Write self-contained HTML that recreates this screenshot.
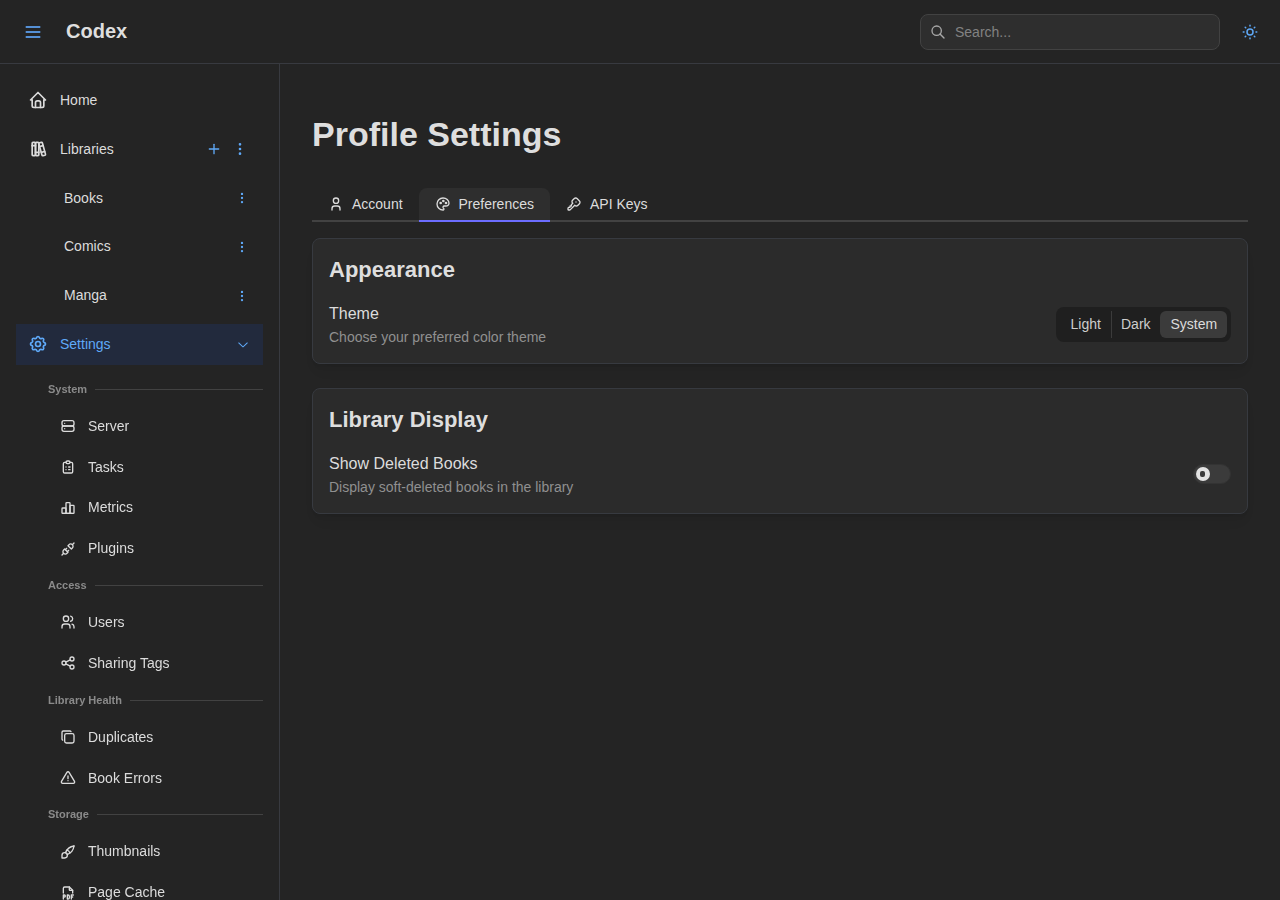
<!DOCTYPE html>
<html><head><meta charset="utf-8"><style>
*{box-sizing:border-box;margin:0;padding:0}
html,body{width:1280px;height:900px;overflow:hidden;background:#242424;font-family:"Liberation Sans",sans-serif;color:#dcdcdc}
.a{position:absolute}
.t{position:absolute;white-space:nowrap}
.f14{font-size:14px;line-height:14px}
.f16{font-size:16px;line-height:16px}
svg.i{fill:none;stroke:currentColor;stroke-width:2;stroke-linecap:round;stroke-linejoin:round;flex:none;display:block}
svg.ab{position:absolute;fill:none;stroke:currentColor;stroke-width:2;stroke-linecap:round;stroke-linejoin:round;display:block}
.row{position:absolute;left:16px;width:247px;height:40.8px;display:flex;align-items:center;font-size:14px;line-height:24.8px;white-space:nowrap}
.row .lb{flex:1}
.lab{position:absolute;left:48px;width:215px;height:33px;display:flex;align-items:center;font-size:11px;font-weight:700;color:#8a8a8a;white-space:nowrap}
.lab .ln{flex:1;height:1px;background:#424242;margin-left:8px}
.kids{position:absolute;left:0;top:0;width:279px;height:900px;will-change:transform}
</style></head><body>
<div class="a" style="left:0;top:63px;width:1280px;height:1px;background:#383a40"></div>
<div class="a" style="left:279px;top:64px;width:1px;height:836px;background:#383a40"></div>
<svg class="a" style="left:20px;top:20px" width="30" height="25"><g fill="#5590d5"><rect x="5.7" y="6" width="14.6" height="2"/><rect x="5.7" y="11" width="14.6" height="2"/><rect x="5.7" y="16" width="14.6" height="2"/></g></svg>
<div class="t" style="left:66px;top:21px;font-size:20px;line-height:20px;font-weight:700;color:#dedede">Codex</div>
<div class="a" style="left:920px;top:14px;width:300px;height:36px;border:1px solid #424242;border-radius:8px;background:#2e2e2e"></div>
<svg class="ab" style="left:930px;top:24px;color:#a8a8a8" width="16" height="16" viewBox="0 0 24 24"><path d="M10 10m-7 0a7 7 0 1 0 14 0a7 7 0 1 0 -14 0"/><path d="M21 21l-6 -6"/></svg>
<div class="t f14" style="left:955px;top:25px;color:#828282">Search...</div>
<svg class="ab" style="left:1241px;top:23px;color:#5fa9f8" width="18" height="18" viewBox="0 0 24 24"><path d="M12 12m-4 0a4 4 0 1 0 8 0a4 4 0 1 0 -8 0"/><path d="M3 12h1m8 -9v1m8 8h1m-9 8v1m-6.4 -15.4l.7 .7m12.1 -.7l-.7 .7m0 11.4l.7 .7m-12.1 -.7l-.7 .7"/></svg>
<div class="row" style="top:80.000px;padding-left:12px"><svg class="i" style="margin-right:12px" width="20" height="20" viewBox="0 0 24 24"><path d="M5 12l-2 0l9 -9l9 9l-2 0"/><path d="M5 12v7a2 2 0 0 0 2 2h10a2 2 0 0 0 2 -2v-7"/><path d="M9 21v-6a2 2 0 0 1 2 -2h2a2 2 0 0 1 2 2v6"/></svg><span class="lb">Home</span></div>
<div class="row" style="top:128.800px;padding-left:12px;padding-right:15px"><svg class="i" style="margin-right:12px" width="20" height="20" viewBox="0 0 24 24"><path d="M5 4m0 1a1 1 0 0 1 1 -1h2a1 1 0 0 1 1 1v14a1 1 0 0 1 -1 1h-2a1 1 0 0 1 -1 -1z"/><path d="M9 4m0 1a1 1 0 0 1 1 -1h2a1 1 0 0 1 1 1v14a1 1 0 0 1 -1 1h-2a1 1 0 0 1 -1 -1z"/><path d="M5 8h4"/><path d="M9 16h4"/><path d="M13.803 4.56l2.184 -.53c.562 -.135 1.133 .19 1.282 .732l3.695 13.418a1.02 1.02 0 0 1 -.634 1.219l-.133 .041l-2.184 .53c-.562 .135 -1.133 -.19 -1.282 -.732l-3.695 -13.418a1.02 1.02 0 0 1 .634 -1.219l.133 -.041z"/><path d="M14 9l4 -1"/><path d="M16 16l3.923 -.98"/></svg><span class="lb">Libraries</span><svg class="i" style="color:#5fa9f8;margin-right:10px" width="16" height="16" viewBox="0 0 24 24"><path d="M12 5l0 14"/><path d="M5 12l14 0"/></svg><svg class="i" style="color:#5fa9f8" width="16" height="16" viewBox="0 0 24 24"><path d="M12 12m-1 0a1 1 0 1 0 2 0a1 1 0 1 0 -2 0"/><path d="M12 19m-1 0a1 1 0 1 0 2 0a1 1 0 1 0 -2 0"/><path d="M12 5m-1 0a1 1 0 1 0 2 0a1 1 0 1 0 -2 0"/></svg></div>
<div class="row" style="top:177.600px;padding-left:48px;padding-right:14px"><span class="lb">Books</span><svg class="i" style="color:#5fa9f8" width="14" height="14" viewBox="0 0 24 24"><path d="M12 12m-1 0a1 1 0 1 0 2 0a1 1 0 1 0 -2 0"/><path d="M12 19m-1 0a1 1 0 1 0 2 0a1 1 0 1 0 -2 0"/><path d="M12 5m-1 0a1 1 0 1 0 2 0a1 1 0 1 0 -2 0"/></svg></div>
<div class="row" style="top:226.400px;padding-left:48px;padding-right:14px"><span class="lb">Comics</span><svg class="i" style="color:#5fa9f8" width="14" height="14" viewBox="0 0 24 24"><path d="M12 12m-1 0a1 1 0 1 0 2 0a1 1 0 1 0 -2 0"/><path d="M12 19m-1 0a1 1 0 1 0 2 0a1 1 0 1 0 -2 0"/><path d="M12 5m-1 0a1 1 0 1 0 2 0a1 1 0 1 0 -2 0"/></svg></div>
<div class="row" style="top:275.200px;padding-left:48px;padding-right:14px"><span class="lb">Manga</span><svg class="i" style="color:#5fa9f8" width="14" height="14" viewBox="0 0 24 24"><path d="M12 12m-1 0a1 1 0 1 0 2 0a1 1 0 1 0 -2 0"/><path d="M12 19m-1 0a1 1 0 1 0 2 0a1 1 0 1 0 -2 0"/><path d="M12 5m-1 0a1 1 0 1 0 2 0a1 1 0 1 0 -2 0"/></svg></div>
<div class="a" style="left:16px;top:324.000px;width:247px;height:40.8px;background:#222a3d"></div>
<div class="row" style="top:324.000px;padding-left:12px;padding-right:12px;color:#5fa9f8"><svg class="i" style="margin-right:12px" width="20" height="20" viewBox="0 0 24 24"><path d="M10.325 4.317c.426 -1.756 2.924 -1.756 3.35 0a1.724 1.724 0 0 0 2.573 1.066c1.543 -.94 3.31 .826 2.37 2.37a1.724 1.724 0 0 0 1.065 2.572c1.756 .426 1.756 2.924 0 3.35a1.724 1.724 0 0 0 -1.066 2.573c.94 1.543 -.826 3.31 -2.37 2.37a1.724 1.724 0 0 0 -2.572 1.065c-.426 1.756 -2.924 1.756 -3.35 0a1.724 1.724 0 0 0 -2.573 -1.066c-1.543 .94 -3.31 -.826 -2.37 -2.37a1.724 1.724 0 0 0 -1.065 -2.572c-1.756 -.426 -1.756 -2.924 0 -3.35a1.724 1.724 0 0 0 1.066 -2.573c-.94 -1.543 .826 -3.31 2.37 -2.37c1 .608 2.296 .07 2.572 -1.065z"/><path d="M9 12a3 3 0 1 0 6 0a3 3 0 0 0 -6 0"/></svg><span class="lb" style="color:#5fa9f8">Settings</span><svg width="16" height="16" viewBox="0 0 15 15" style="flex:none;display:block;fill:currentColor"><path d="M3.13523 6.15803C3.3241 5.95657 3.64052 5.94637 3.84197 6.13523L7.5 9.56464L11.158 6.13523C11.3595 5.94637 11.6759 5.95657 11.8648 6.15803C12.0536 6.35949 12.0434 6.67591 11.842 6.86477L7.84197 10.6148C7.64964 10.7951 7.35036 10.7951 7.15803 10.6148L3.15803 6.86477C2.95657 6.67591 2.94637 6.35949 3.13523 6.15803Z"/></svg></div>
<div class="kids"><div class="lab" style="top:372.800px"><span style="position:relative;top:0px">System</span><span class="ln"></span></div><div class="row" style="top:405.800px;padding-left:44px"><svg class="i" style="margin-right:12px;position:relative;top:0px" width="16" height="16" viewBox="0 0 24 24"><path d="M3 4m0 3a3 3 0 0 1 3 -3h12a3 3 0 0 1 3 3v2a3 3 0 0 1 -3 3h-12a3 3 0 0 1 -3 -3z"/><path d="M3 12m0 3a3 3 0 0 1 3 -3h12a3 3 0 0 1 3 3v2a3 3 0 0 1 -3 3h-12a3 3 0 0 1 -3 -3z"/><path d="M7 8l0 .01"/><path d="M7 16l0 .01"/></svg><span class="lb" style="position:relative;top:0px">Server</span></div><div class="row" style="top:446.600px;padding-left:44px"><svg class="i" style="margin-right:12px;position:relative;top:0px" width="16" height="16" viewBox="0 0 24 24"><path d="M9 5h-2a2 2 0 0 0 -2 2v12a2 2 0 0 0 2 2h10a2 2 0 0 0 2 -2v-12a2 2 0 0 0 -2 -2h-2"/><path d="M9 3m0 2a2 2 0 0 1 2 -2h2a2 2 0 0 1 2 2v0a2 2 0 0 1 -2 2h-2a2 2 0 0 1 -2 -2z"/><path d="M9 12l.01 0"/><path d="M13 12l2 0"/><path d="M9 16l.01 0"/><path d="M13 16l2 0"/></svg><span class="lb" style="position:relative;top:0px">Tasks</span></div><div class="row" style="top:487.400px;padding-left:44px"><svg class="i" style="margin-right:12px;position:relative;top:0px" width="16" height="16" viewBox="0 0 24 24"><path d="M3 13a1 1 0 0 1 1 -1h4a1 1 0 0 1 1 1v6a1 1 0 0 1 -1 1h-4a1 1 0 0 1 -1 -1z"/><path d="M15 9a1 1 0 0 1 1 -1h4a1 1 0 0 1 1 1v10a1 1 0 0 1 -1 1h-4a1 1 0 0 1 -1 -1z"/><path d="M9 5a1 1 0 0 1 1 -1h4a1 1 0 0 1 1 1v14a1 1 0 0 1 -1 1h-4a1 1 0 0 1 -1 -1z"/><path d="M4 20h14"/></svg><span class="lb" style="position:relative;top:0px">Metrics</span></div><div class="row" style="top:528.200px;padding-left:44px"><svg class="i" style="margin-right:12px;position:relative;top:0px" width="16" height="16" viewBox="0 0 24 24"><path d="M7 12l5 5l-1.5 1.5a3.536 3.536 0 1 1 -5 -5l1.5 -1.5z"/><path d="M17 12l-5 -5l1.5 -1.5a3.536 3.536 0 1 1 5 5l-1.5 1.5z"/><path d="M3 21l2.5 -2.5"/><path d="M18.5 5.5l2.5 -2.5"/><path d="M10 11l-2 2"/><path d="M13 14l-2 2"/></svg><span class="lb" style="position:relative;top:0px">Plugins</span></div><div class="lab" style="top:569.000px"><span style="position:relative;top:-1px">Access</span><span class="ln"></span></div><div class="row" style="top:602.000px;padding-left:44px"><svg class="i" style="margin-right:12px;position:relative;top:0px" width="16" height="16" viewBox="0 0 24 24"><path d="M9 7m-4 0a4 4 0 1 0 8 0a4 4 0 1 0 -8 0"/><path d="M3 21v-2a4 4 0 0 1 4 -4h4a4 4 0 0 1 4 4v2"/><path d="M16 3.13a4 4 0 0 1 0 7.75"/><path d="M21 21v-2a4 4 0 0 0 -3 -3.85"/></svg><span class="lb" style="position:relative;top:0px">Users</span></div><div class="row" style="top:642.800px;padding-left:44px"><svg class="i" style="margin-right:12px;position:relative;top:0px" width="16" height="16" viewBox="0 0 24 24"><path d="M6 12m-3 0a3 3 0 1 0 6 0a3 3 0 1 0 -6 0"/><path d="M18 6m-3 0a3 3 0 1 0 6 0a3 3 0 1 0 -6 0"/><path d="M18 18m-3 0a3 3 0 1 0 6 0a3 3 0 1 0 -6 0"/><path d="M8.7 10.7l6.6 -3.4"/><path d="M8.7 13.3l6.6 3.4"/></svg><span class="lb" style="position:relative;top:0px">Sharing Tags</span></div><div class="lab" style="top:683.600px"><span style="position:relative;top:0px">Library Health</span><span class="ln"></span></div><div class="row" style="top:716.600px;padding-left:44px"><svg class="i" style="margin-right:12px;position:relative;top:0px" width="16" height="16" viewBox="0 0 24 24"><path d="M7 7m0 2.667a2.667 2.667 0 0 1 2.667 -2.667h8.666a2.667 2.667 0 0 1 2.667 2.667v8.666a2.667 2.667 0 0 1 -2.667 2.667h-8.666a2.667 2.667 0 0 1 -2.667 -2.667z"/><path d="M4.012 16.737a2.005 2.005 0 0 1 -1.012 -1.737v-10c0 -1.1 .9 -2 2 -2h10c.75 0 1.158 .385 1.5 1"/></svg><span class="lb" style="position:relative;top:0px">Duplicates</span></div><div class="row" style="top:757.400px;padding-left:44px"><svg class="i" style="margin-right:12px;position:relative;top:0px" width="16" height="16" viewBox="0 0 24 24"><path d="M12 9v4"/><path d="M10.363 3.591l-8.106 13.534a1.914 1.914 0 0 0 1.636 2.871h16.214a1.914 1.914 0 0 0 1.636 -2.87l-8.106 -13.536a1.914 1.914 0 0 0 -3.274 0z"/><path d="M12 16h.01"/></svg><span class="lb" style="position:relative;top:1px">Book Errors</span></div><div class="lab" style="top:798.200px"><span style="position:relative;top:-1px">Storage</span><span class="ln"></span></div><div class="row" style="top:831.200px;padding-left:44px"><svg class="i" style="margin-right:12px;position:relative;top:0px" width="16" height="16" viewBox="0 0 24 24"><path d="M3 21v-4a4 4 0 1 1 4 4h-4"/><path d="M21 3a16 16 0 0 0 -12.8 10.2"/><path d="M21 3a16 16 0 0 1 -10.2 12.8"/><path d="M10.6 9a9 9 0 0 1 4.4 4.4"/></svg><span class="lb" style="position:relative;top:0px">Thumbnails</span></div><div class="row" style="top:872.000px;padding-left:44px"><svg class="i" style="margin-right:12px;position:relative;top:1px" width="16" height="16" viewBox="0 0 24 24"><path d="M14 3v4a1 1 0 0 0 1 1h4"/><path d="M5 12v-7a2 2 0 0 1 2 -2h7l5 5v4"/><path d="M5 18h1.5a1.5 1.5 0 0 0 0 -3h-1.5v6"/><path d="M17 18h2"/><path d="M20 15h-3v6"/><path d="M11 15v6h1a2 2 0 0 0 2 -2v-2a2 2 0 0 0 -2 -2h-1z"/></svg><span class="lb" style="position:relative;top:0px">Page Cache</span></div></div>
<div class="t" style="left:312px;top:117px;font-size:34px;line-height:34px;font-weight:700;color:#dedede">Profile Settings</div>
<div class="a" style="left:312px;top:220px;width:936px;height:2px;background:#424242"></div>
<div class="a" style="left:419px;top:188px;width:131px;height:34px;background:#2e2e2e;border-radius:8px 8px 0 0;border-bottom:2px solid #6c6dff"></div>
<svg class="ab" style="left:328px;top:196px;color:#dcdcdc" width="16" height="16" viewBox="0 0 24 24"><path d="M8 7a4 4 0 1 0 8 0a4 4 0 0 0 -8 0"/><path d="M6 21v-2a4 4 0 0 1 4 -4h4a4 4 0 0 1 4 4v2"/></svg>
<div class="t f14" style="left:352px;top:197px">Account</div>
<svg class="ab" style="left:435px;top:196px;color:#dcdcdc" width="16" height="16" viewBox="0 0 24 24"><path d="M12 21a9 9 0 0 1 0 -18c4.97 0 9 3.582 9 8c0 1.06 -.474 2.078 -1.318 2.828c-.844 .75 -1.989 1.172 -3.182 1.172h-2.5a2 2 0 0 0 -1 3.75a1.3 1.3 0 0 1 -1 2.25"/><path d="M8.5 10.5m-1 0a1 1 0 1 0 2 0a1 1 0 1 0 -2 0"/><path d="M12.5 7.5m-1 0a1 1 0 1 0 2 0a1 1 0 1 0 -2 0"/><path d="M16.5 10.5m-1 0a1 1 0 1 0 2 0a1 1 0 1 0 -2 0"/></svg>
<div class="t f14" style="left:458.5px;top:197px">Preferences</div>
<svg class="ab" style="left:566px;top:196px;color:#dcdcdc" width="16" height="16" viewBox="0 0 24 24"><path d="M16.555 3.843l3.602 3.602a2.877 2.877 0 0 1 0 4.069l-2.643 2.643a2.877 2.877 0 0 1 -4.069 0l-.301 -.301l-6.558 6.558a2 2 0 0 1 -1.239 .578l-.175 .008h-1.172a1 1 0 0 1 -.993 -.883l-.007 -.117v-1.172a2 2 0 0 1 .467 -1.284l.119 -.13l.414 -.414h2v-2h2v-2l2.144 -2.144l-.301 -.301a2.877 2.877 0 0 1 0 -4.069l2.643 -2.643a2.877 2.877 0 0 1 4.069 0z"/><path d="M15 9h.01"/></svg>
<div class="t f14" style="left:590px;top:197px">API Keys</div>
<div class="a" style="left:312px;top:238px;width:936px;height:126px;border:1px solid #373a40;border-radius:8px;background:#2b2b2b;box-shadow:0 1px 3px rgba(0,0,0,.05),rgba(0,0,0,.05) 0 10px 15px -5px,rgba(0,0,0,.04) 0 7px 7px -5px"></div>
<div class="t" style="left:329px;top:259px;font-size:22px;line-height:22px;font-weight:700;color:#dedede">Appearance</div>
<div class="t f16" style="left:329px;top:306px">Theme</div>
<div class="t f14" style="left:329px;top:330px;color:#909090">Choose your preferred color theme</div>
<div class="a" style="left:1056px;top:307px;width:175px;height:35px;border-radius:8px;background:#1f1f1f"></div>
<div class="a" style="left:1160px;top:311px;width:67px;height:27px;border-radius:6px;background:#3b3b3b"></div>
<div class="a" style="left:1111px;top:311px;width:1px;height:27px;background:#3b3b3b"></div>
<div class="t f14" style="left:1070.5px;top:317px;color:#cdcdcd">Light</div>
<div class="t f14" style="left:1121px;top:317px;color:#cdcdcd">Dark</div>
<div class="t f14" style="left:1170.5px;top:317px">System</div>
<div class="a" style="left:312px;top:388px;width:936px;height:126px;border:1px solid #373a40;border-radius:8px;background:#2b2b2b;box-shadow:0 1px 3px rgba(0,0,0,.05),rgba(0,0,0,.05) 0 10px 15px -5px,rgba(0,0,0,.04) 0 7px 7px -5px"></div>
<div class="t" style="left:329px;top:409px;font-size:22px;line-height:22px;font-weight:700;color:#dedede">Library Display</div>
<div class="t f16" style="left:329px;top:456px">Show Deleted Books</div>
<div class="t f14" style="left:329px;top:480px;color:#909090">Display soft-deleted books in the library</div>
<div class="a" style="left:1193px;top:464px;width:38px;height:20px;border-radius:10px;background:#3b3b3b;border:1px solid #333"></div>
<div class="a" style="left:1196px;top:467px;width:14px;height:14px;border-radius:7px;background:#e2e2e2"></div>
<div class="a" style="left:1200px;top:471px;width:5px;height:6px;border-radius:2px;background:#3a3a3a"></div>
</body></html>
